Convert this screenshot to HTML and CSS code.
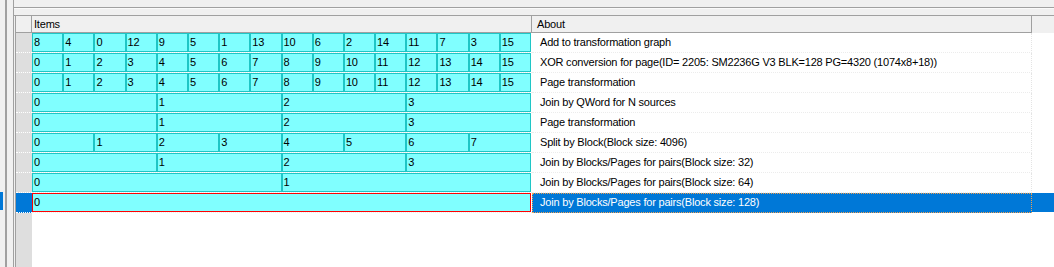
FILE: index.html
```html
<!DOCTYPE html>
<html lang="en">
    <head>
        <meta charset="UTF-8">
        <title>Transformation list</title>
        <link rel="stylesheet" href="styles.css">
    </head>
    <body>
        <div class="side">
            <div class="side-mark"></div>
        </div>
        <div class="splitter"></div>
        <main class="main">
            <div class="toolbar"></div>
            <div class="band"></div>
            <section class="grid">
                <div class="row head">
                    <div class="hc hc-corner"></div>
                    <div class="hc hc-items">Items</div>
                    <div class="hc hc-about">About</div>
                    <div class="hc hc-rest"></div>
                </div>
                <div class="row">
                    <div class="rh"></div>
                    <div class="items">
                        <span class="c">8</span><span class="c">4</span><span class="c">0</span><span class="c">12</span>
                        <span class="c">9</span><span class="c">5</span><span class="c">1</span><span class="c">13</span>
                        <span class="c">10</span><span class="c">6</span><span class="c">2</span><span class="c">14</span>
                        <span class="c">11</span><span class="c">7</span><span class="c">3</span><span class="c">15</span>
                    </div>
                    <div class="about">Add to transformation graph</div>
                    <div class="rest"></div>
                </div>
                <div class="row">
                    <div class="rh"></div>
                    <div class="items">
                        <span class="c">0</span><span class="c">1</span><span class="c">2</span><span class="c">3</span>
                        <span class="c">4</span><span class="c">5</span><span class="c">6</span><span class="c">7</span>
                        <span class="c">8</span><span class="c">9</span><span class="c">10</span><span class="c">11</span>
                        <span class="c">12</span><span class="c">13</span><span class="c">14</span><span class="c">15</span>
                    </div>
                    <div class="about">XOR conversion for page(ID= 2205: SM2236G V3 BLK=128 PG=4320 (1074x8+18))</div>
                    <div class="rest"></div>
                </div>
                <div class="row">
                    <div class="rh"></div>
                    <div class="items">
                        <span class="c">0</span><span class="c">1</span><span class="c">2</span><span class="c">3</span>
                        <span class="c">4</span><span class="c">5</span><span class="c">6</span><span class="c">7</span>
                        <span class="c">8</span><span class="c">9</span><span class="c">10</span><span class="c">11</span>
                        <span class="c">12</span><span class="c">13</span><span class="c">14</span><span class="c">15</span>
                    </div>
                    <div class="about">Page transformation</div>
                    <div class="rest"></div>
                </div>
                <div class="row">
                    <div class="rh"></div>
                    <div class="items">
                        <span class="c">0</span><span class="c">1</span><span class="c">2</span><span class="c">3</span>
                    </div>
                    <div class="about">Join by QWord for N sources</div>
                    <div class="rest"></div>
                </div>
                <div class="row">
                    <div class="rh"></div>
                    <div class="items">
                        <span class="c">0</span><span class="c">1</span><span class="c">2</span><span class="c">3</span>
                    </div>
                    <div class="about">Page transformation</div>
                    <div class="rest"></div>
                </div>
                <div class="row">
                    <div class="rh"></div>
                    <div class="items">
                        <span class="c">0</span><span class="c">1</span><span class="c">2</span><span class="c">3</span>
                        <span class="c">4</span><span class="c">5</span><span class="c">6</span><span class="c">7</span>
                    </div>
                    <div class="about">Split by Block(Block size: 4096)</div>
                    <div class="rest"></div>
                </div>
                <div class="row">
                    <div class="rh"></div>
                    <div class="items">
                        <span class="c">0</span><span class="c">1</span><span class="c">2</span><span class="c">3</span>
                    </div>
                    <div class="about">Join by Blocks/Pages for pairs(Block size: 32)</div>
                    <div class="rest"></div>
                </div>
                <div class="row">
                    <div class="rh"></div>
                    <div class="items">
                        <span class="c">0</span><span class="c">1</span>
                    </div>
                    <div class="about">Join by Blocks/Pages for pairs(Block size: 64)</div>
                    <div class="rest"></div>
                </div>
                <div class="row selected">
                    <div class="rh"></div>
                    <div class="items">
                        <span class="c c-current">0</span>
                    </div>
                    <div class="about">Join by Blocks/Pages for pairs(Block size: 128)</div>
                    <div class="rest"></div>
                </div>
                <div class="row filler">
                    <div class="rh"></div>
                </div>
            </section>
        </main>
    </body>
</html>
```

FILE: styles.css
```css
html, body
{
    margin: 0;
    height: 100%;
}
body
{
    display: flex;
    background-color: #f0f0f0;
    font-family: "Liberation Sans", Arial, sans-serif;
    font-size: 11px;
    letter-spacing: -0.2px;
    color: #000;
    overflow: hidden;
}
.side
{
    width: 3px;
    padding-top: 192px;
}
.side-mark
{
    height: 18px;
    background-color: #0078d7;
}
.splitter
{
    width: 6px;
    margin-left: 2px;
    border-left: 2px solid #a0a0a0;
}
.main
{
    flex: 1;
    display: flex;
    flex-direction: column;
    border-left: 1px solid #a0a0a0;
}
.toolbar
{
    height: 7px;
    border-bottom: 1px solid #a0a0a0;
}
.band
{
    height: 6px;
    border-top: 1px solid #fafafa;
    border-bottom: 1px solid #a0a0a0;
}
.grid
{
    flex: 1;
    display: flex;
    flex-direction: column;
    margin-left: 1px;
    border-left: 1px solid #a0a0a0;
    background-color: #fff;
}
.row
{
    display: grid;
    grid-template-columns: 16px 500px 500px 1fr;
    height: 20px;
}
.head
{
    height: 17px;
}
.hc
{
    box-sizing: border-box;
    background-color: #f0f0f0;
    border-right: 1px solid #a0a0a0;
    border-bottom: 1px solid #a0a0a0;
    line-height: 16px;
}
.hc-items
{
    padding-left: 2px;
}
.hc-about
{
    padding-left: 5px;
}
.hc-rest
{
    border: none;
}
.rh
{
    box-sizing: border-box;
    background-color: #dedede;
    border-bottom: 1px dotted #fff;
}
.items
{
    box-sizing: border-box;
    display: flex;
    padding-right: 1px;
    border-bottom: 1px dotted #efefef;
}
.c
{
    flex: 1 1 0;
    min-width: 0;
    box-sizing: border-box;
    padding-left: 1px;
    border: 1px solid #1fc6c6;
    background-color: #80ffff;
    line-height: 17px;
    overflow: hidden;
}
.c-current
{
    border-color: #ff0000;
}
.about
{
    box-sizing: border-box;
    padding-left: 8px;
    border-right: 1px dotted #e4e4e4;
    border-bottom: 1px dotted #ececec;
    line-height: 19px;
    white-space: nowrap;
}
.selected .rh,
.selected .rest
{
    background-color: #0078d7;
}
.selected .about
{
    padding-left: 7px;
    line-height: 17px;
    background-color: #0078d7;
    color: #fff;
    border: 1px dotted #f0a050;
}
.selected .rest
{
    height: 19px;
}
.filler
{
    flex: 1;
}
.filler .rh
{
    border-bottom: none;
}
```
